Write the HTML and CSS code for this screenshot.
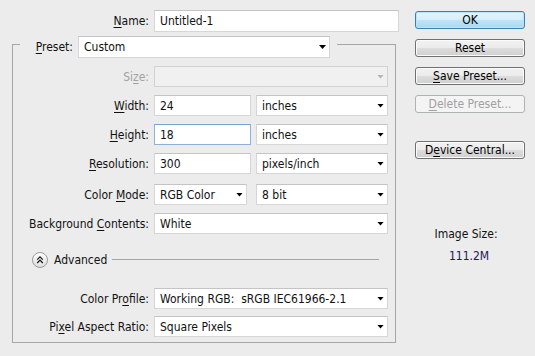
FILE: index.html
```html
<!DOCTYPE html>
<html>
<head>
<meta charset="utf-8">
<link rel="stylesheet" href="styles.css">
</head>
<body>
<div class="dialog">
  <div class="main">
    <div class="name-row">
      <span class="lbl"><u>N</u>ame:</span>
      <div class="field input w-name">Untitled-1</div>
    </div>
    <div class="group">
      <div class="group-head">
        <span class="head-lbl"><u>P</u>reset:</span>
        <div class="field select w-preset"><span>Custom</span></div>
      </div>
      <div class="rows">
        <div class="row">
          <span class="lbl disabled">Si<u>z</u>e:</span>
          <div class="field select w-full is-disabled"><span></span></div>
        </div>
        <div class="row">
          <span class="lbl"><u>W</u>idth:</span>
          <div class="field input w-num">24</div>
          <div class="field select w-unit"><span>inches</span></div>
        </div>
        <div class="row">
          <span class="lbl"><u>H</u>eight:</span>
          <div class="field input w-num focused">18</div>
          <div class="field select w-unit"><span>inches</span></div>
        </div>
        <div class="row">
          <span class="lbl"><u>R</u>esolution:</span>
          <div class="field input w-num">300</div>
          <div class="field select w-unit"><span>pixels/inch</span></div>
        </div>
        <div class="row row-sep">
          <span class="lbl">Color <u>M</u>ode:</span>
          <div class="field select w-mode"><span>RGB Color</span></div>
          <div class="field select w-unit"><span>8 bit</span></div>
        </div>
        <div class="row">
          <span class="lbl">Background <u>C</u>ontents:</span>
          <div class="field select w-full"><span>White</span></div>
        </div>
      </div>
      <div class="advanced">
        <span class="adv-btn">
          <svg width="16" height="16" viewBox="0 0 16 16">
            <defs>
              <linearGradient id="ag" x1="0" y1="0" x2="0" y2="1">
                <stop offset="0" stop-color="#ffffff"/>
                <stop offset="1" stop-color="#dcdcdc"/>
              </linearGradient>
            </defs>
            <circle cx="8" cy="8" r="7.5" fill="url(#ag)" stroke="#9a9a9a"/>
            <path d="M5.2 7.6 L8 4.8 L10.8 7.6 M5.2 11 L8 8.2 L10.8 11" fill="none" stroke="#111" stroke-width="1.2"/>
          </svg>
        </span>
        <span class="adv-text">Advanced</span>
        <span class="adv-line"></span>
      </div>
      <div class="rows adv-rows">
        <div class="row">
          <span class="lbl">Color Pr<u>o</u>file:</span>
          <div class="field select w-full"><span>Working RGB:&nbsp; sRGB IEC61966-2.1</span></div>
        </div>
        <div class="row">
          <span class="lbl">Pi<u>x</u>el Aspect Ratio:</span>
          <div class="field select w-full"><span>Square Pixels</span></div>
        </div>
      </div>
    </div>
  </div>
  <div class="side">
    <div class="btn default">OK</div>
    <div class="btn">Reset</div>
    <div class="btn"><u>S</u>ave Preset...</div>
    <div class="btn disabled-btn"><u>D</u>elete Preset...</div>
    <div class="btn btn-sep">D<u>e</u>vice Central...</div>
    <div class="info">
      <div class="info-title">Image Size:</div>
      <div class="info-val">111.2M</div>
    </div>
  </div>
</div>
</body>
</html>
```

FILE: styles.css
```css
html, body {
  margin: 0;
  padding: 0;
  background: #ececec;
}
body {
  width: 535px;
  height: 356px;
  overflow: hidden;
  font-family: "DejaVu Sans Condensed", "DejaVu Sans", sans-serif;
  font-stretch: condensed;
  font-size: 12px;
  color: #111;
}
u { text-decoration: underline; text-underline-offset: 2px; }

.dialog {
  display: flex;
  padding-top: 10px;
}
.main { width: 400px; }

.name-row {
  display: flex;
  align-items: center;
  gap: 5px;
}
.name-row .lbl { width: 149px; }
.lbl {
  text-align: right;
  white-space: nowrap;
}
.lbl.disabled { color: #a3a3a3; }

.field {
  box-sizing: border-box;
  height: 21px;
  background: #fff;
  border: 1px solid #d6d6d6;
  border-top-color: #c4c4c4;
  display: flex;
  align-items: center;
  padding-left: 5px;
  white-space: nowrap;
}
.w-name { width: 245px; height: 22px; }
.input.focused { border-color: #8db2d8; border-top-color: #7aa3cf; }

.select {
  justify-content: space-between;
  padding-right: 3px;
}
.select::after {
  content: "";
  width: 7px;
  height: 4px;
  background: #000;
  clip-path: polygon(0 0, 100% 0, 50% 100%);
  flex: none;
}
.select.is-disabled { background: #f0f0f0; border-color: #d2d2d2; }
.select.is-disabled::after { background: #b4b4b4; }

.group {
  margin: 12px 0 0 12px;
  width: 384px;
  box-sizing: border-box;
  border: 1px solid #a6a6a6;
  padding-bottom: 5px;
}
.group-head {
  display: flex;
  align-items: center;
  width: 317px;
  box-sizing: border-box;
  margin: -9px 0 0 7px;
  padding: 0 7px 0 14px;
  background: #ececec;
}
.head-lbl {
  flex: 1;
  text-align: right;
  padding-right: 5px;
}
.w-preset { width: 252px; height: 22px; }

.rows {
  padding-top: 8px;
  display: flex;
  flex-direction: column;
  gap: 8px;
}
.row {
  display: flex;
  align-items: center;
  height: 21px;
}
.row .lbl { width: 136px; margin-right: 5px; }
.row-sep { margin-top: 2px; }
.w-full { width: 234px; }
.w-num { width: 97px; margin-right: 5px; }
.w-mode { width: 93px; margin-right: 9px; }
.w-unit { width: 132px; }

.advanced {
  display: flex;
  align-items: center;
  height: 16px;
  margin-top: 18px;
  padding-left: 19px;
  padding-right: 16px;
}
.adv-btn { display: flex; width: 16px; height: 16px; }
.adv-text { margin-left: 6px; }
.adv-line {
  flex: 1;
  height: 1px;
  background: #a6a6a6;
  margin-left: 5px;
  margin-top: -1px;
}
.adv-rows { padding-top: 20px; gap: 7px; }

.side {
  margin-left: 15px;
  width: 110px;
  display: flex;
  flex-direction: column;
  padding-top: 1px;
}
.btn {
  box-sizing: border-box;
  height: 18px;
  margin-bottom: 10px;
  border: 1px solid #707070;
  border-radius: 3px;
  background: linear-gradient(#f2f2f2 0%, #ebebeb 50%, #dddddd 50%, #cfcfcf 100%);
  box-shadow: inset 0 0 0 1px #fbfbfb;
  display: flex;
  align-items: center;
  justify-content: center;
  color: #000;
}
.btn.default {
  border-color: #3c7fb1;
  background: linear-gradient(#e5f4fc 0%, #d6eefb 50%, #bde4f9 50%, #a9d9f2 100%);
  box-shadow: inset 0 0 0 1px #b6e6fb;
}
.btn.disabled-btn {
  border-color: #adb2b5;
  background: #f4f4f4;
  box-shadow: none;
  color: #a0a0a0;
}
.btn-sep { margin-top: 18px; }

.info {
  margin-top: 58px;
  text-align: center;
  padding-right: 8px;
}
.info-title { color: #111; }
.info-val { margin-top: 8px; color: #24165a; padding-left: 6px; }
```
